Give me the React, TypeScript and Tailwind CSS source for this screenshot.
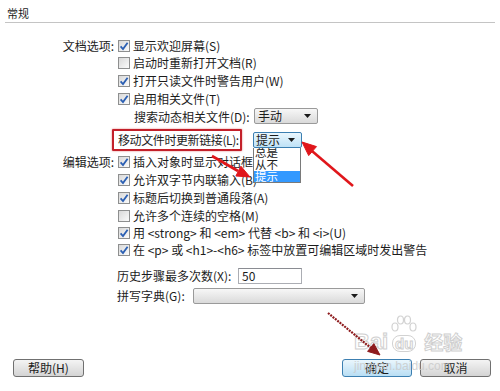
import React from 'react';

// Preferences dialog ("常规" page) with red annotation arrows on top

function CheckBox({ checked }: { checked: boolean }) {
  return (
    <span className="flex h-[12px] w-[12px] shrink-0 items-center justify-center border border-[#8e8f8f] bg-linear-to-br from-[#d9d9d9] to-[#fbfbfb]">
      {checked && (
        <svg width="10" height="10" viewBox="0 0 10 10">
          <path d="M1.6 5.4 L4 8 L8.6 1.8" fill="none" stroke="#2b5fb3" strokeWidth="1.8" />
        </svg>
      )}
    </span>
  );
}

function Caret() {
  return (
    <svg width="7" height="4" viewBox="0 0 7 4" className="shrink-0">
      <path d="M0 0 H7 L3.5 4 Z" fill="#1a1a1a" />
    </svg>
  );
}

function Row({ label, h, children }: { label?: string; h: string; children: React.ReactNode }) {
  return (
    <div className={`flex items-center ${h}`}>
      <div className="w-[114px] shrink-0 text-right">{label}</div>
      <div className="ml-[4px] flex items-center">{children}</div>
    </div>
  );
}

function Item({ checked, text }: { checked: boolean; text: string }) {
  return (
    <div className="flex items-center gap-[3px]">
      <CheckBox checked={checked} />
      <span className="whitespace-pre">{text}</span>
    </div>
  );
}

function Button({ label, primary }: { label: string; primary?: boolean }) {
  return (
    <div
      className={
        primary
          ? 'flex h-[18px] w-[70px] items-center justify-center rounded-[3px] border border-[#3c7fb1] bg-linear-to-b from-[#eaf6fd] to-[#b9def4]'
          : 'flex h-[18px] w-[71px] items-center justify-center rounded-[3px] border border-[#707070] bg-linear-to-b from-[#f4f4f4] to-[#d4d4d4]'
      }
    >
      {label}
    </div>
  );
}

export default function App() {
  return (
    <div className="relative h-[391px] w-[500px] overflow-hidden bg-white font-['Noto_Sans_CJK_SC',sans-serif] text-[12px] leading-[18px] text-[#1c1c1c]">
      {/* title */}
      <div className="mx-[5px] h-[23px] border-b border-[#c4c4c4] pl-[2px] pt-[5px] text-[11px] leading-[16px]">常规</div>

      <div className="mt-[14px] flex flex-col">
        <Row label="文档选项:" h="h-[17px]">
          <Item checked text="显示欢迎屏幕(S)" />
        </Row>
        <Row h="h-[18px]">
          <Item checked={false} text="启动时重新打开文档(R)" />
        </Row>
        <Row h="h-[18px]">
          <Item checked text="打开只读文件时警告用户(W)" />
        </Row>
        <Row h="h-[18px]">
          <Item checked text="启用相关文件(T)" />
        </Row>
        <Row h="h-[18px]">
          <span className="ml-[16px] w-[120px] whitespace-nowrap">搜索动态相关文件(D):</span>
          <div className="mb-[3px] flex h-[16px] w-[64px] items-center justify-between rounded-[2px] border border-[#9a9a9a] bg-linear-to-b from-[#f7f7f7] to-[#dadada] pl-[3px] pr-[6px] leading-[14px]">
            <span>手动</span>
            <Caret />
          </div>
        </Row>
        <div className="mt-[3px]">
          <Row h="h-[22px]">
            <div className="ml-[-6px] flex h-[22px] w-[130px] items-center whitespace-nowrap rounded-[1px] border-2 border-[#c3202a] pl-[4px] tracking-[-0.4px] shadow-[0_0_2px_#e07070]">
              移动文件时更新链接(L):
            </div>
            <div className="relative ml-[11px]">
              <div className="flex h-[16px] w-[49px] items-center justify-between rounded-[2px] border border-[#3c7fb1] bg-linear-to-b from-[#eaf6fd] to-[#bfe2f6] pl-[2px] pr-[6px] leading-[14px]">
                <span>提示</span>
                <Caret />
              </div>
              <div className="absolute left-0 top-[16px] w-[48px] border border-t-0 border-[#7a7a7a] bg-white text-[11.5px] leading-[11px]">
                <div className="h-[11px] overflow-hidden pl-[1px]">
                  <span className="relative top-[-1px]">总是</span>
                </div>
                <div className="h-[12px] overflow-hidden pl-[1px]">从不</div>
                <div className="h-[11px] overflow-hidden bg-[#3399ff] pl-[1px] text-white">提示</div>
              </div>
            </div>
          </Row>
        </div>

        <div className="mt-[2px]">
          <Row label="编辑选项:" h="h-[18px]">
            <Item checked text="插入对象时显示对话框(I)" />
          </Row>
        </div>
        <Row h="h-[18px]">
          <Item checked text="允许双字节内联输入(B)" />
        </Row>
        <Row h="h-[18px]">
          <Item checked text="标题后切换到普通段落(A)" />
        </Row>
        <Row h="h-[17px]">
          <Item checked={false} text="允许多个连续的空格(M)" />
        </Row>
        <Row h="h-[17px]">
          <Item checked text="用 <strong> 和 <em> 代替 <b> 和 <i>(U)" />
        </Row>
        <Row h="h-[18px]">
          <Item checked text="在 <p> 或 <h1>-<h6> 标签中放置可编辑区域时发出警告" />
        </Row>

        <div className="ml-[117px] mt-[8px] flex h-[18px] items-center">
          <span className="w-[121px]">历史步骤最多次数(X):</span>
          <div className="flex h-[16px] w-[64px] items-center border border-[#abadb3] border-t-[#8a8c92] bg-white pl-[3px] leading-[14px]">50</div>
        </div>
        <div className="ml-[117px] mt-[2px] flex h-[18px] items-center">
          <span className="w-[76px]">拼写字典(G):</span>
          <div className="flex h-[16px] w-[172px] items-center justify-end rounded-[2px] border border-[#9a9a9a] bg-linear-to-b from-[#f7f7f7] to-[#dadada] pr-[6px]">
            <Caret />
          </div>
        </div>

        <div className="mt-[54px] flex items-center justify-between pl-[13px] pr-[9px]">
          <Button label="帮助(H)" />
          <div className="flex gap-[8px]">
            <Button label="确定" primary />
            <Button label="取消" />
          </div>
        </div>
      </div>

      {/* Baidu watermark */}
      <div className="pointer-events-none absolute left-[354px] top-[315px] opacity-80">
        <div className="flex items-end font-['Liberation_Sans',sans-serif]">
          <span className="text-[22px] font-bold leading-[20px] text-white [-webkit-text-stroke:1px_#c4c4c4]">Bai</span>
          <div className="ml-[2px] flex flex-col items-center">
            <svg width="28" height="20" viewBox="0 0 28 20">
              <g fill="none" stroke="#c8c8c8" strokeWidth="1.2">
                <ellipse cx="5" cy="12" rx="3" ry="4" />
                <ellipse cx="10.5" cy="5" rx="3" ry="4" />
                <ellipse cx="17.5" cy="5" rx="3" ry="4" />
                <ellipse cx="23" cy="12" rx="3" ry="4" />
              </g>
            </svg>
            <span className="flex h-[17px] items-center rounded-[8px] border border-[#c8c8c8] px-[2px] text-[15px] font-bold leading-[15px] text-white [-webkit-text-stroke:1px_#c4c4c4]">du</span>
          </div>
          <span className="ml-[6px] font-['Noto_Sans_CJK_SC',sans-serif] text-[19px] font-bold leading-[20px] text-white [-webkit-text-stroke:1px_#c4c4c4]">经验</span>
        </div>
        <div className="mt-[8px] font-['Liberation_Sans',sans-serif] text-[12px] leading-[12px] text-[#c9c9c9]">jingyan.baidu.com</div>
      </div>

      {/* red annotation arrows */}
      <svg className="pointer-events-none absolute left-0 top-0" width="500" height="391" viewBox="0 0 500 391">
        <g fill="#e0161b" stroke="#e0161b">
          <line x1="353" y1="186" x2="312" y2="151" strokeWidth="2.6" />
          <polygon points="302,142 316.5,146.6 308.7,155.6" strokeWidth="1" />
          <line x1="212" y1="156" x2="238" y2="171" strokeWidth="2.6" />
          <polygon points="250,177 235.9,176 240.9,166.2" strokeWidth="1" />
        </g>
        <g fill="#8e1b1e" stroke="#8e1b1e">
          <line x1="328" y1="313" x2="371" y2="348" strokeWidth="2.2" strokeDasharray="2 1" />
          <polygon points="380,355 367.6,351.4 373.8,343.6" strokeWidth="1" />
        </g>
      </svg>
    </div>
  );
}
